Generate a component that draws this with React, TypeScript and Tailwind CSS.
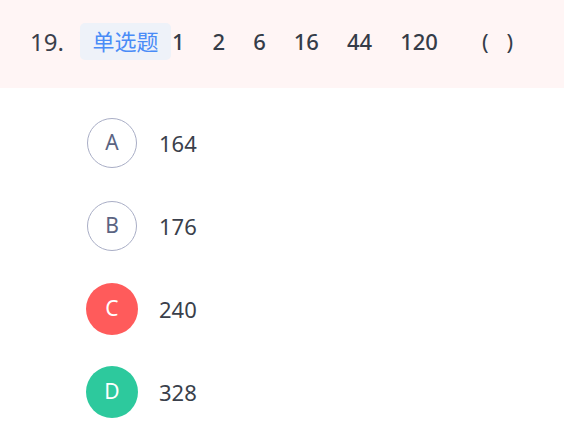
import React from 'react';

const numbers = ['1', '2', '6', '16', '44', '120'];

const options = [
  { key: 'A', text: '164', state: 'idle' },
  { key: 'B', text: '176', state: 'idle' },
  { key: 'C', text: '240', state: 'wrong' },
  { key: 'D', text: '328', state: 'right' },
];

const font = { fontFamily: '"Noto Sans", "Noto Sans CJK SC", sans-serif' };

const OptionBadge = ({ letter, state }: { letter: string; state: string }) => {
  if (state === 'wrong') {
    return (
      <div className="w-[52px] h-[52px] rounded-full bg-[#ff5b5b] text-white flex items-center justify-center text-[21px]">
        {letter}
      </div>
    );
  }
  if (state === 'right') {
    return (
      <div className="w-[52px] h-[52px] rounded-full bg-[#2dc99d] text-white flex items-center justify-center text-[21px]">
        {letter}
      </div>
    );
  }
  return (
    <div className="w-[50px] h-[50px] rounded-full border border-[#a9aec6] text-[#5b6482] flex items-center justify-center text-[21px]">
      {letter}
    </div>
  );
};

const App = () => {
  return (
    <div className="w-[564px] h-[431px] bg-white overflow-hidden" style={font}>
      {/* question header */}
      <div className="h-[88px] bg-[#fff5f5] flex items-center pl-[30px] pb-[5px]">
        <span className="text-[24px] text-[#3a3f4b] w-[50px]">19.</span>
        <span className="h-[37px] w-[91px] rounded-[5px] bg-[#eef2f9] text-[#4a8cf7] text-[22px] flex items-center justify-center">
          单选题
        </span>
        <div className="flex items-center gap-[28px] ml-[1px] text-[22px] font-medium text-[#353c48]">
          {numbers.map(n => (
            <span key={n}>{n}</span>
          ))}
          <span className="ml-[16px] font-normal flex gap-[18px]">
            <span>(</span>
            <span>)</span>
          </span>
        </div>
      </div>

      {/* options */}
      <div className="flex flex-col gap-[31px] pl-[86px] pt-[29px]">
        {options.map(opt => (
          <div key={opt.key} className="flex items-center h-[52px]">
            <div className="w-[52px] flex justify-center">
              <OptionBadge letter={opt.key} state={opt.state} />
            </div>
            <span className="ml-[21px] text-[22px] text-[#3a3f4b]">{opt.text}</span>
          </div>
        ))}
      </div>
    </div>
  );
};

export default App;
